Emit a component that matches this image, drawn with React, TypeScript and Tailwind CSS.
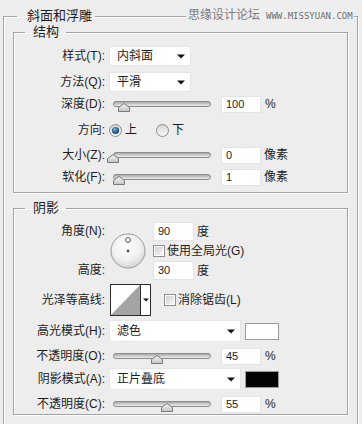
import type { ReactNode } from 'react';
import { clsx } from 'clsx';

const etched = 'border border-[#a3a3a3] shadow-[inset_1px_1px_0_#fff,1px_1px_0_#fff]';

function Defs() {
  return (
    <svg className="block h-0 w-0" aria-hidden="true">
      <defs>
        <linearGradient id="thumbFill" x1="0" y1="0" x2="0" y2="1">
          <stop offset="0" stopColor="#fafafa" />
          <stop offset="1" stopColor="#c2c2c2" />
        </linearGradient>
        <linearGradient id="radioFill" x1="0" y1="0" x2="0" y2="1">
          <stop offset="0" stopColor="#d6d6d6" />
          <stop offset="1" stopColor="#fbfbfb" />
        </linearGradient>
        <radialGradient id="radioDot" cx="0.4" cy="0.35" r="0.7">
          <stop offset="0" stopColor="#8fc0e8" />
          <stop offset="0.5" stopColor="#2f6898" />
          <stop offset="1" stopColor="#163a5c" />
        </radialGradient>
        <radialGradient id="dialFill" cx="0.45" cy="0.35" r="0.7">
          <stop offset="0" stopColor="#ffffff" />
          <stop offset="0.6" stopColor="#f0f0f0" />
          <stop offset="1" stopColor="#cfcfcf" />
        </radialGradient>
      </defs>
    </svg>
  );
}

function Row({ label, className, children }: { label: string; className?: string; children?: ReactNode }) {
  return (
    <div className={clsx('flex items-center', className)}>
      <span className="w-[91px] shrink-0 text-right">{label}</span>
      {children}
    </div>
  );
}

function Arrow() {
  return (
    <svg width="8" height="5" viewBox="0 0 8 5">
      <path d="M0 0.5 H8 L4 4.5 Z" fill="#111" />
    </svg>
  );
}

function Dropdown({ value, className }: { value: string; className: string }) {
  return (
    <div className={clsx('ml-[4px] flex items-center justify-between border border-[#e6e6e6] bg-white pl-[7px] pr-[5px]', className)}>
      <span>{value}</span>
      <Arrow />
    </div>
  );
}

function Slider({ pos }: { pos: number }) {
  return (
    <div className="relative ml-[8px] flex h-full w-[98px] items-center">
      <div className="h-[6px] w-full rounded-full border border-[#8c8c8c] bg-gradient-to-b from-[#a9a9a9] via-[#cbcbcb] to-[#ececec]" />
      <svg className="absolute top-1/2 -mt-[1px] -ml-[6px]" style={{ left: pos }} width="12" height="9" viewBox="0 0 12 9">
        <path d="M6 0.5 L11.5 4.5 V8.5 H0.5 V4.5 Z" fill="url(#thumbFill)" stroke="#7a7a7a" />
      </svg>
    </div>
  );
}

function NumBox({ value, className }: { value: string; className?: string }) {
  return (
    <div className={clsx('flex h-[17px] w-[40px] items-center border border-[#e3e3e3] bg-white pl-[4px] text-[11px] leading-none', className)}>
      {value}
    </div>
  );
}

function Radio({ checked }: { checked?: boolean }) {
  return (
    <svg width="13" height="13" viewBox="0 0 13 13">
      <circle cx="6.5" cy="6.5" r="6" fill="url(#radioFill)" stroke="#8d8d8d" />
      {checked && <circle cx="6.5" cy="6.5" r="3.6" fill="url(#radioDot)" />}
    </svg>
  );
}

function Checkbox() {
  return (
    <div className="h-[12px] w-[12px] border border-[#8f8f8f] bg-white p-[1px]">
      <div className="h-full w-full bg-gradient-to-br from-[#d2d2d2] to-[#f7f7f7]" />
    </div>
  );
}

function Dial() {
  return (
    <svg width="36" height="36" viewBox="0 0 36 36">
      <circle cx="18" cy="18" r="17" fill="url(#dialFill)" stroke="#9b9b9b" />
      <circle cx="18" cy="7" r="2.4" fill="#fff" stroke="#555" strokeWidth="1" />
      <circle cx="18" cy="18" r="1.4" fill="#555" />
    </svg>
  );
}

function Contour() {
  return (
    <div className="ml-[5px] flex h-[32px] w-[41px] border border-[#2b2b2b] bg-white">
      <svg width="29" height="30" viewBox="0 0 29 30">
        <path d="M0 30 L29 0 V30 Z" fill="#a4a4a4" />
      </svg>
      <div className="flex flex-1 items-center justify-center border-l border-[#2b2b2b]">
        <svg width="6" height="4" viewBox="0 0 6 4">
          <path d="M0 0.5 H6 L3 3.5 Z" fill="#111" />
        </svg>
      </div>
    </div>
  );
}

function Swatch({ color }: { color: string }) {
  return <div className={clsx('ml-[4px] h-[17px] w-[34px] border border-[#9c9c9c]', color)} />;
}

export default function App() {
  return (
    <div className="relative h-[424px] w-[362px] overflow-hidden bg-[#ededed] font-['Liberation_Sans','Noto_Sans_CJK_SC',sans-serif] text-[12px] leading-[16px] text-[#1d1d1d]">
      <Defs />
      <fieldset className={clsx('mt-[8px] ml-[3px] w-[355px] px-[9px] pb-[10px]', etched)}>
        <legend className="ml-[4px] pl-[10px] pr-[3px] text-[13px] leading-[16px]">斜面和浮雕</legend>

        <fieldset className={clsx('pb-[5px]', etched)}>
          <legend className="ml-[11px] pl-[8px] pr-[7px] text-[13px] leading-[16px]">结构</legend>
          <div className="flex flex-col pt-[6px]">
            <Row label="样式(T):" className="h-[20px]">
              <Dropdown value="内斜面" className="h-[20px] w-[82px]" />
            </Row>
            <Row label="方法(Q):" className="mt-[6px] h-[20px]">
              <Dropdown value="平滑" className="h-[20px] w-[82px]" />
            </Row>
            <Row label="深度(D):" className="mt-[2px] h-[20px]">
              <Slider pos={11} />
              <NumBox value="100" className="ml-[10px]" />
              <span className="ml-[4px]">%</span>
            </Row>
            <Row label="方向:" className="mt-[6px] h-[20px]">
              <div className="ml-[4px] flex items-center">
                <Radio checked />
                <span className="ml-[3px]">上</span>
                <div className="ml-[19px]">
                  <Radio />
                </div>
                <span className="ml-[3px]">下</span>
              </div>
            </Row>
            <Row label="大小(Z):" className="mt-[5px] h-[20px]">
              <Slider pos={0} />
              <NumBox value="0" className="ml-[10px]" />
              <span className="ml-[3px]">像素</span>
            </Row>
            <Row label="软化(F):" className="mt-[2px] h-[20px]">
              <Slider pos={6} />
              <NumBox value="1" className="ml-[10px]" />
              <span className="ml-[3px]">像素</span>
            </Row>
          </div>
        </fieldset>

        <fieldset className={clsx('mt-[7px] pb-[1px]', etched)}>
          <legend className="ml-[11px] pl-[8px] pr-[7px] text-[13px] leading-[16px]">阴影</legend>
          <div className="flex flex-col pt-[6px]">
            <div className="flex h-[58px]">
              <div className="flex w-[91px] shrink-0 flex-col justify-between text-right">
                <span className="leading-[19px]">角度(N):</span>
                <span className="leading-[19px]">高度:</span>
              </div>
              <div className="ml-[5px] self-center">
                <Dial />
              </div>
              <div className="ml-[7px] flex flex-col">
                <div className="flex h-[19px] items-center">
                  <NumBox value="90" className="h-[19px] w-[41px]" />
                  <span className="ml-[3px]">度</span>
                </div>
                <div className="flex h-[20px] items-center">
                  <Checkbox />
                  <span className="ml-[2px]">使用全局光(G)</span>
                </div>
                <div className="flex h-[19px] items-center">
                  <NumBox value="30" className="h-[19px] w-[41px]" />
                  <span className="ml-[3px]">度</span>
                </div>
              </div>
            </div>
            <Row label="光泽等高线:" className="mt-[4px] h-[32px]">
              <Contour />
              <div className="ml-[13px]">
                <Checkbox />
              </div>
              <span className="ml-[2px]">消除锯齿(L)</span>
            </Row>
            <Row label="高光模式(H):" className="mt-[4px] h-[22px]">
              <Dropdown value="滤色" className="h-[22px] w-[132px]" />
              <Swatch color="bg-white" />
            </Row>
            <Row label="不透明度(O):" className="mt-[5px] h-[18px]">
              <Slider pos={44} />
              <NumBox value="45" className="ml-[10px]" />
              <span className="ml-[4px]">%</span>
            </Row>
            <Row label="阴影模式(A):" className="mt-[3px] h-[22px]">
              <Dropdown value="正片叠底" className="h-[22px] w-[132px]" />
              <Swatch color="bg-[#050505]" />
            </Row>
            <Row label="不透明度(C):" className="mt-[5px] h-[18px]">
              <Slider pos={54} />
              <NumBox value="55" className="ml-[10px]" />
              <span className="ml-[4px]">%</span>
            </Row>
          </div>
        </fieldset>
      </fieldset>

      <div className="absolute top-[5px] left-[186px] flex h-[19px] w-[168px] items-center bg-[#eeeeee] pl-[2px]">
        <span className="text-[12px] text-[#7c7c7c]">思缘设计论坛</span>
        <span className="ml-[6px] mt-[3px] font-['DejaVu_Sans_Mono',monospace] text-[9px] text-[#6e6e6e]">WWW.MISSYUAN.COM</span>
      </div>
    </div>
  );
}
